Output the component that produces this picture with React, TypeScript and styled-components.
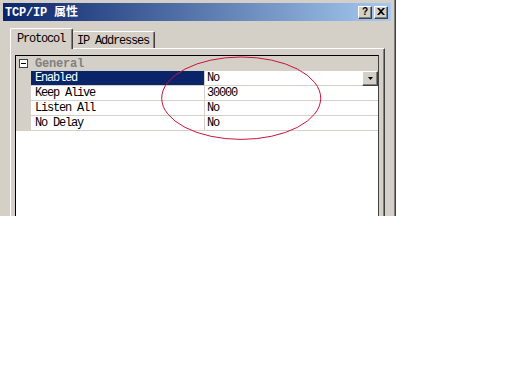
import styled, { createGlobalStyle } from "styled-components";

const rows = [
  { name: "Enabled", value: "No", selected: true, dropdown: true },
  { name: "Keep Alive", value: "30000" },
  { name: "Listen All", value: "No" },
  { name: "No Delay", value: "No" },
];

const GlobalStyle = createGlobalStyle`
  html, body {
    margin: 0;
    padding: 0;
    background: #ffffff;
  }
`;

const App = () => {
  return (
    <Page>
      <GlobalStyle />
      <Window>
        <TitleBar>
          <Title>
            TCP/IP <Cjk>属性</Cjk>
          </Title>
          <CaptionButtons>
            <CaptionButton>?</CaptionButton>
            <CaptionButton>
              <svg width="8" height="7" viewBox="0 0 8 7">
                <path d="M0 0 L2 0 L4 2 L6 0 L8 0 L5 3.5 L8 7 L6 7 L4 5 L2 7 L0 7 L3 3.5 Z" fill="#000" />
              </svg>
            </CaptionButton>
          </CaptionButtons>
        </TitleBar>
        <Content>
          <TabRow>
            <Tab active>Protocol</Tab>
            <Tab>IP Addresses</Tab>
          </TabRow>
          <Panel>
            <Grid>
              <CategoryRow>
                <Gutter>
                  <Toggle />
                </Gutter>
                <CategoryLabel>General</CategoryLabel>
              </CategoryRow>
              {rows.map((r) => (
                <Row key={r.name}>
                  <Gutter />
                  <NameCell selected={r.selected}>{r.name}</NameCell>
                  <ValueCell>
                    <ValueText>{r.value}</ValueText>
                    {r.dropdown && (
                      <DropButton>
                        <svg width="5" height="3" viewBox="0 0 5 3">
                          <path d="M0 0 L5 0 L2.5 3 Z" fill="#000" />
                        </svg>
                      </DropButton>
                    )}
                  </ValueCell>
                </Row>
              ))}
            </Grid>
          </Panel>
        </Content>
      </Window>
      <Markup width="512" height="384" viewBox="0 0 512 384">
        <ellipse cx="241.2" cy="98.2" rx="79.5" ry="41.2" fill="none" stroke="#c8143c" strokeWidth="1" />
      </Markup>
    </Page>
  );
};

export default App;

const Page = styled.div`
  position: relative;
  width: 512px;
  height: 384px;
  background: #fff;
  overflow: hidden;
  font-family: "Liberation Mono", "Noto Sans CJK SC", monospace;
  font-size: 12px;
  letter-spacing: -1.2px;
  color: #000;
`;

const Window = styled.div`
  box-sizing: border-box;
  width: 396px;
  height: 216px;
  background: #d4d0c8;
  border-right: 1px solid #404040;
  box-shadow: inset -1px 0 #808080;
  padding: 3px 4px 0 3px;
  display: flex;
  flex-direction: column;
  overflow: hidden;
`;

const TitleBar = styled.div`
  height: 18px;
  flex-shrink: 0;
  display: flex;
  align-items: center;
  justify-content: space-between;
  padding: 0 3px 0 2px;
  background: linear-gradient(to right, #0a246a, #a6caf0);
`;

const Title = styled.div`
  color: #fff;
  font-weight: bold;
  letter-spacing: -0.2px;
  line-height: 18px;
  white-space: pre;
`;

const Cjk = styled.span`
  font-family: "Noto Sans CJK SC", sans-serif;
  letter-spacing: 0;
`;

const CaptionButtons = styled.div`
  display: flex;
  gap: 2px;
`;

const CaptionButton = styled.div`
  box-sizing: border-box;
  width: 14px;
  height: 13px;
  background: #d4d0c8;
  border-top: 1px solid #fff;
  border-left: 1px solid #fff;
  border-right: 1px solid #404040;
  border-bottom: 1px solid #404040;
  box-shadow: inset -1px -1px #808080;
  display: flex;
  align-items: center;
  justify-content: center;
  font-family: "Liberation Sans", sans-serif;
  font-weight: bold;
  font-size: 10px;
  letter-spacing: 0;
  line-height: 1;
  padding-bottom: 1px;
`;

const Content = styled.div`
  flex: 1;
  display: flex;
  flex-direction: column;
  padding: 7px 6px 0 7px;
  min-height: 0;
`;

const TabRow = styled.div`
  height: 20px;
  display: flex;
  align-items: flex-end;
  flex-shrink: 0;
`;

const Tab = styled.div<{ active?: boolean }>`
  box-sizing: border-box;
  position: relative;
  z-index: ${(p) => (p.active ? 1 : 0)};
  height: ${(p) => (p.active ? "21px" : "17px")};
  margin-bottom: ${(p) => (p.active ? "-1px" : "0")};
  padding: ${(p) => (p.active ? "3px 0 0 6px" : "2px 0 0 4px")};
  width: ${(p) => (p.active ? "63px" : "82px")};
  background: #d4d0c8;
  border-top: 1px solid #fff;
  border-left: ${(p) => (p.active ? "1px solid #fff" : "none")};
  border-right: 1px solid #404040;
  box-shadow: inset -1px 0 #808080;
  border-radius: 2px 2px 0 0;
  line-height: 14px;
  white-space: pre;
`;

const Panel = styled.div`
  flex: 1;
  min-height: 0;
  box-sizing: border-box;
  border-top: 1px solid #fff;
  border-left: 1px solid #fff;
  border-right: 1px solid #404040;
  box-shadow: inset -1px 0 #808080;
  padding: 6px 5px 0 4px;
  display: flex;
  flex-direction: column;
`;

const Grid = styled.div`
  flex: 1;
  background: #fff;
  border-top: 1px solid #000;
  border-left: 1px solid #000;
  border-right: 1px solid #404040;
  display: flex;
  flex-direction: column;
`;

const CategoryRow = styled.div`
  height: 15px;
  display: flex;
  background: #d4d0c8;
`;

const Gutter = styled.div`
  width: 15px;
  flex-shrink: 0;
  background: #d4d0c8;
`;

const Toggle = styled.div`
  box-sizing: border-box;
  width: 9px;
  height: 9px;
  margin: 3px 0 0 3px;
  border: 1px solid #404040;
  background: #fff;
  position: relative;

  &::after {
    content: "";
    position: absolute;
    left: 1px;
    top: 3px;
    width: 5px;
    height: 1px;
    background: #000;
  }
`;

const CategoryLabel = styled.div`
  padding: 1px 0 0 4px;
  font-weight: bold;
  letter-spacing: -0.2px;
  color: #808080;
  line-height: 14px;
`;

const Row = styled.div`
  height: 15px;
  display: flex;
`;

const NameCell = styled.div<{ selected?: boolean }>`
  box-sizing: border-box;
  width: 174px;
  flex-shrink: 0;
  padding-left: 4px;
  line-height: 14px;
  white-space: pre;
  border-right: 1px solid #d4d0c8;
  border-bottom: 1px solid #d4d0c8;
  background: ${(p) => (p.selected ? "#0a246a" : "#fff")};
  color: ${(p) => (p.selected ? "#fff" : "#000")};
`;

const ValueCell = styled.div`
  box-sizing: border-box;
  flex: 1;
  display: flex;
  border-bottom: 1px solid #d4d0c8;
`;

const ValueText = styled.div`
  flex: 1;
  padding-left: 2px;
  line-height: 14px;
`;

const DropButton = styled.div`
  box-sizing: border-box;
  width: 16px;
  height: 15px;
  background: #d4d0c8;
  border-top: 1px solid #fff;
  border-left: 1px solid #fff;
  border-right: 1px solid #404040;
  border-bottom: 1px solid #404040;
  box-shadow: inset -1px -1px #808080;
  display: flex;
  align-items: center;
  justify-content: center;
`;

const Markup = styled.svg`
  position: absolute;
  left: 0;
  top: 0;
  pointer-events: none;
`;
